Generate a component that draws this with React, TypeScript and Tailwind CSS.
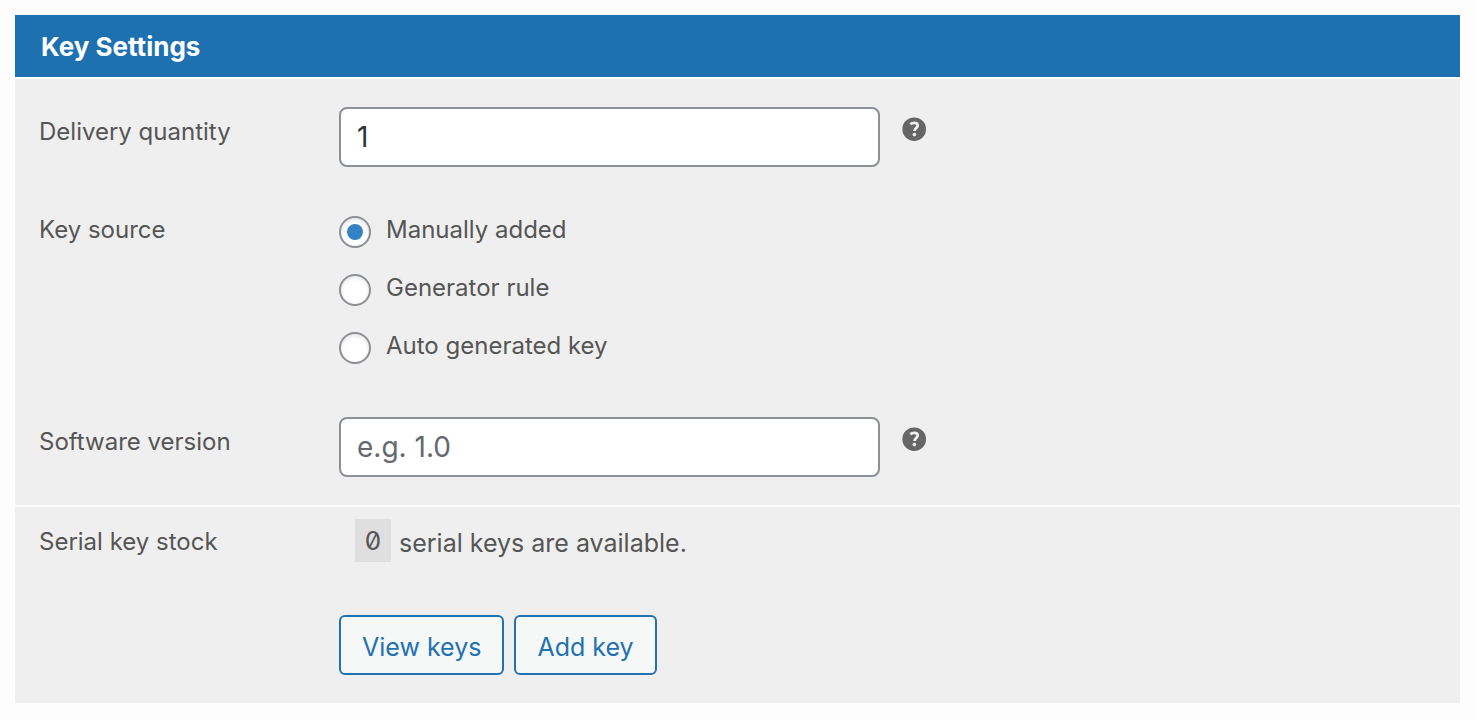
import { useState } from "react";

const SOURCES = ["Manually added", "Generator rule", "Auto generated key"];

function HelpIcon({ label }: { label: string }) {
  return (
    <button type="button" aria-label={label} className="mt-2.5 ml-[22px] h-6 w-6 shrink-0">
      <svg viewBox="0 0 24 24" className="h-6 w-6">
        <circle cx="12.2" cy="12.2" r="11.8" fill="#666" />
        <path d="M8.3 7.2C9.5 6.3 10.8 5.9 12.2 5.9c2.2 0 3.5 1 3.5 2.7 0 2.4-3.1 2.5-3.1 5.3" fill="none" stroke="#f0f0f0" strokeWidth="2.8" />
        <circle cx="12.4" cy="17.6" r="1.8" fill="#f0f0f0" />
      </svg>
    </button>
  );
}

const labelClass = "w-[300px] shrink-0 text-2xl leading-8";
const inputClass =
  "h-[60px] w-[541px] rounded-lg border-2 border-[#8c8f94] bg-white px-4 text-[28px] text-[#2c3338] placeholder:text-[#646970] outline-none";
const buttonClass =
  "h-[60px] rounded-md border-2 border-[#2271b1] bg-[#f6f7f7] px-[21px] pt-1 text-[25px] leading-8 text-[#2271b1]";

export default function App() {
  const [source, setSource] = useState(SOURCES[0]);
  const [quantity, setQuantity] = useState("1");
  const [version, setVersion] = useState("");

  return (
    <main className="min-h-screen bg-[#fdfdfd] p-[15px] pr-4 font-['Inter',sans-serif] text-[#555]">
      <h2 className="bg-[#1d71b1] px-[26px] pt-4 pb-3.5 text-[26px] leading-8 font-bold text-white">
        Key Settings
      </h2>
      <section className="mt-0.5 bg-[#efefef] px-6 pt-7 pb-7">
        <div className="flex items-start">
          <label htmlFor="quantity" className={`${labelClass} pt-[9px]`}>Delivery quantity</label>
          <input id="quantity" className={inputClass} value={quantity} onChange={(e) => setQuantity(e.target.value)} />
          <HelpIcon label="About delivery quantity" />
        </div>
        <div role="radiogroup" aria-labelledby="source" className="mt-[47px] flex items-start">
          <span id="source" className={labelClass}>Key source</span>
          <div className="flex flex-col gap-6">
            {SOURCES.map((s) => (
              <label key={s} className="flex items-start gap-[15px] text-2xl leading-8">
                <input
                  type="radio"
                  name="source"
                  checked={source === s}
                  onChange={() => setSource(s)}
                  className="mt-0.5 grid h-8 w-8 appearance-none place-items-center rounded-full border-2 border-[#8c8f94] bg-white shadow-[inset_0_2px_4px_rgba(0,0,0,0.1)] before:h-4 before:w-4 before:rounded-full checked:before:bg-[#3582c4]"
                />
                {s}
              </label>
            ))}
          </div>
        </div>
        <div className="mt-[53px] flex items-start">
          <label htmlFor="version" className={`${labelClass} pt-[9px]`}>Software version</label>
          <input id="version" className={inputClass} placeholder="e.g. 1.0" value={version} onChange={(e) => setVersion(e.target.value)} />
          <HelpIcon label="About software version" />
        </div>
      </section>
      <section className="mt-0.5 flex items-start bg-[#efefef] px-6 pt-3 pb-7">
        <span className={`${labelClass} pt-[7px]`}>Serial key stock</span>
        <div>
          <p className="flex items-start pl-4 text-[25px]">
            <code className="mr-2 w-9 bg-[#dfdfe0] text-center font-['Inter',sans-serif] text-[26px] leading-[43px] slashed-zero">0</code>
            <span className="pt-2 leading-8">serial keys are available.</span>
          </p>
          <div className="mt-[53px] flex gap-2.5">
            <button type="button" className={buttonClass}>View keys</button>
            <button type="button" className={buttonClass}>Add key</button>
          </div>
        </div>
      </section>
    </main>
  );
}
